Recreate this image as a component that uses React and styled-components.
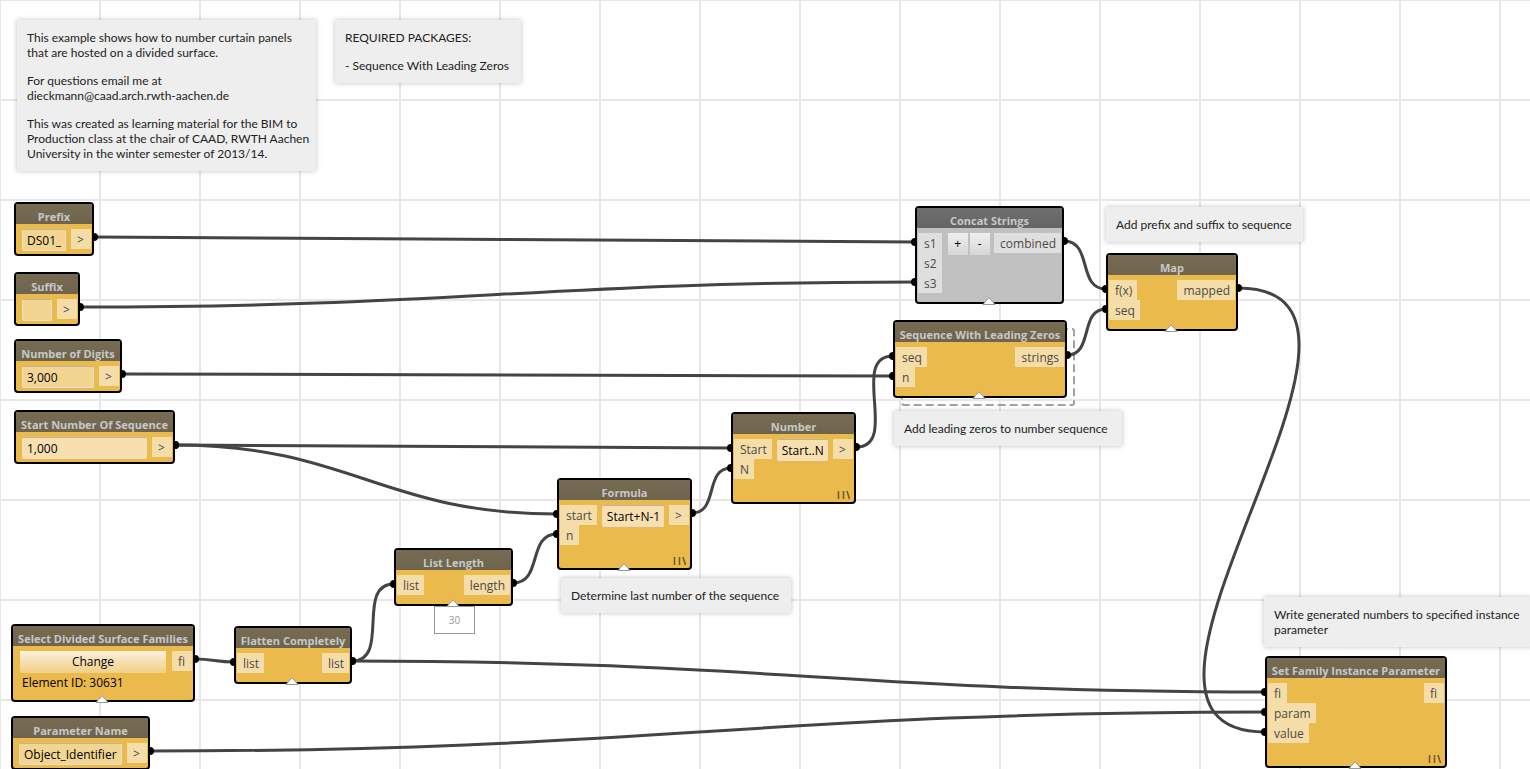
import React from "react";
import styled, { createGlobalStyle } from "styled-components";

const GlobalStyle = createGlobalStyle`
  *, *::before, *::after { box-sizing: border-box; }
  body { margin: 0; background: #fff; overflow: hidden; }
  button, input { font: inherit; color: inherit; }
`;

const ui = `"Open Sans", "Noto Sans", sans-serif`;

const Canvas = styled.main`
  position: relative;
  width: 100%;
  height: 100vh;
  overflow: hidden;
  font: 12px/20px ${ui};
  color: #000;
  background-color: #fff;
  background-image:
    linear-gradient(to right, #e7e7e7 2px, transparent 2px),
    linear-gradient(to bottom, #e7e7e7 2px, transparent 2px);
  background-size: 100px 100px;
  background-position: -1px -1px;
`;

const Wires = styled.svg`
  position: absolute;
  inset: 0;
  width: 100%;
  height: 100%;
  fill: none;
`;

const NoteBox = styled.aside`
  position: absolute;
  left: ${(p) => p.$x}px;
  top: ${(p) => p.$y}px;
  width: ${(p) => p.$w}px;
  display: flex;
  flex-direction: column;
  gap: 13px;
  padding: 10px;
  background: #eee;
  color: #222;
  font: 12px/15px Lato, "Open Sans", sans-serif;
  white-space: pre;
  box-shadow: 0 0 5px rgba(0, 0, 0, 0.25);
  p { margin: 0; }
`;

const NodeBox = styled.section`
  position: absolute;
  left: ${(p) => p.$x}px;
  top: ${(p) => p.$y}px;
  width: ${(p) => p.$w}px;
  height: ${(p) => p.$h}px;
  border: 2px solid #000;
  border-radius: 4px;
  background: ${(p) => (p.$muted ? "#c0c0c0" : "#ebba4c")};
`;

const Title = styled.h2`
  margin: 0;
  height: 20px;
  padding-top: 4px;
  font: bold 11px/18px ${ui};
  text-align: center;
  white-space: nowrap;
  color: #c8c8c8;
  background: ${(p) =>
    p.$muted
      ? "linear-gradient(#6f6f6f, #646464)"
      : "linear-gradient(#776b52, #6e644e)"};
`;

const Row = styled.div`
  display: flex;
  align-items: flex-start;
  padding: 5px 1px 0;
`;

const Ports = styled.div`
  display: flex;
  flex-direction: column;
  align-items: ${(p) => (p.$out ? "flex-end" : "flex-start")};
`;

const Port = styled.span`
  min-width: ${(p) => (p.$out ? 20 : 19)}px;
  height: 20px;
  padding: 0 5px 0 6px;
  line-height: 21px;
  color: #4d4a43;
  background: ${(p) => (p.$muted ? "#dfdfdf" : "#f4dda8")};
`;

const Middle = styled.div`
  flex: 1;
  min-width: 0;
  display: flex;
  flex-direction: ${(p) => (p.$stacked ? "column" : "row")};
  gap: 2px;
  padding: 0 ${(p) => (p.$wide ? 6 : 5)}px;
`;

const Field = styled.input`
  width: 100%;
  height: 22px;
  padding: 0 4px;
  border: 1px solid #e6dfcf;
  border-top-color: #b9b4a6;
  border-radius: 2px;
  background: ${(p) => (p.$light ? "#f7dfb0" : "#f3d592")};
  outline: none;
`;

const StepButton = styled.button`
  flex: none;
  width: 20px;
  height: 22px;
  padding: 0;
  border: 0;
  background: linear-gradient(#f0f0f0, #d6d6d6);
`;

const WideButton = styled.button`
  height: 22px;
  padding: 0;
  border: 0;
  background: linear-gradient(#fbf0d9, #f1cf88);
`;

const ElementId = styled.div`
  height: 18px;
  padding-left: 2px;
  line-height: 16px;
  white-space: nowrap;
`;

const PreviewArrow = styled.svg`
  position: absolute;
  left: 50%;
  bottom: -3px;
  width: 14px;
  height: 8px;
  margin-left: -8px;
`;

const Lacing = styled.svg`
  position: absolute;
  right: 3px;
  bottom: 2px;
  width: 14px;
  height: 10px;
  fill: none;
  stroke: #6b5a2e;
  stroke-width: 1.5;
`;

const Preview = styled.output`
  position: absolute;
  left: 434px;
  top: 606px;
  width: 41px;
  height: 28px;
  border: 1px solid #999;
  background: #fff;
  color: #999;
  font-size: 10px;
  line-height: 27px;
  text-align: center;
`;

const notes = [
  {
    x: 17, y: 20, w: 299,
    text: [
      "This example shows how to number curtain panels\nthat are hosted on a divided surface.",
      "For questions email me at\ndieckmann@caad.arch.rwth-aachen.de",
      "This was created as learning material for the BIM to\nProduction class at the chair of CAAD, RWTH Aachen\nUniversity in the winter semester of 2013/14.",
    ],
  },
  { x: 335, y: 20, w: 186, text: ["REQUIRED PACKAGES:", "- Sequence With Leading Zeros"] },
  { x: 1106, y: 207, w: 197, text: ["Add prefix and suffix to sequence"] },
  { x: 894, y: 411, w: 228, text: ["Add leading zeros to number sequence"] },
  { x: 561, y: 578, w: 230, text: ["Determine last number of the sequence"] },
  { x: 1264, y: 597, w: 268, text: ["Write generated numbers to specified instance\nparameter"] },
];

const nodes = [
  { title: "Prefix", x: 14, y: 202, w: 80, h: 54, field: "DS01_", outs: [">"] },
  { title: "Suffix", x: 14, y: 272, w: 66, h: 54, field: "", outs: [">"] },
  { title: "Number of Digits", x: 14, y: 339, w: 108, h: 54, field: "3,000", outs: [">"] },
  { title: "Start Number Of Sequence", x: 14, y: 410, w: 161, h: 54, field: "1,000", light: true, outs: [">"] },
  { title: "Concat Strings", x: 915, y: 206, w: 149, h: 98, muted: true, steps: true, ins: ["s1", "s2", "s3"], outs: ["combined"], arrow: true },
  { title: "Map", x: 1106, y: 253, w: 132, h: 78, ins: ["f(x)", "seq"], outs: ["mapped"], arrow: true },
  { title: "Sequence With Leading Zeros", x: 893, y: 320, w: 174, h: 78, ins: ["seq", "n"], outs: ["strings"], arrow: true },
  { title: "Number", x: 731, y: 412, w: 125, h: 92, ins: ["Start", "N"], field: "Start..N", light: true, outs: [">"], lacing: true },
  { title: "Formula", x: 557, y: 478, w: 135, h: 92, ins: ["start", "n"], field: "Start+N-1", light: true, outs: [">"], lacing: true, arrow: true },
  { title: "List Length", x: 394, y: 548, w: 119, h: 58, ins: ["list"], outs: ["length"], arrow: true },
  { title: "Select Divided Surface Families", x: 11, y: 624, w: 184, h: 78, change: true, outs: ["fi"], arrow: true },
  { title: "Flatten Completely", x: 234, y: 626, w: 118, h: 58, ins: ["list"], outs: ["list"], arrow: true },
  { title: "Parameter Name", x: 11, y: 716, w: 139, h: 54, field: "Object_Identifier", outs: [">"] },
  { title: "Set Family Instance Parameter", x: 1265, y: 656, w: 182, h: 112, ins: ["fi", "param", "value"], outs: ["fi"], lacing: true, arrow: true },
];

const wires = [
  [94, 237, 915, 242],
  [80, 307, 915, 282],
  [122, 374, 893, 376],
  [175, 445, 731, 448],
  [175, 445, 557, 514],
  [513, 583, 557, 534],
  [692, 513, 731, 468],
  [856, 447, 893, 356],
  [1064, 241, 1106, 289],
  [1067, 355, 1106, 309],
  [1238, 288, 1265, 732],
  [195, 659, 234, 662],
  [352, 661, 394, 584],
  [352, 661, 1265, 692],
  [150, 751, 1265, 712],
];

const curve = ([x1, y1, x2, y2]) => {
  const reach = Math.round(Math.hypot(x2 - x1, y2 - y1) * 0.45);
  return `M${x1} ${y1}C${x1 + reach} ${y1} ${x2 - reach} ${y2} ${x2} ${y2}`;
};

function Note({ x, y, w, text }) {
  return (
    <NoteBox $x={x} $y={y} $w={w}>
      {text.map((t) => <p key={t}>{t}</p>)}
    </NoteBox>
  );
}

function Node({ title, x, y, w, h, muted, ins = [], outs = [], field, light, steps, change, arrow, lacing }) {
  return (
    <NodeBox $x={x} $y={y} $w={w} $h={h} $muted={muted}>
      <Title $muted={muted}>{title}</Title>
      <Row>
        <Ports>{ins.map((p) => <Port key={p} $muted={muted}>{p}</Port>)}</Ports>
        <Middle $wide={steps || change} $stacked={change}>
          {field !== undefined && <Field $light={light} aria-label={title} defaultValue={field} />}
          {steps && <StepButton type="button">+</StepButton>}
          {steps && <StepButton type="button">-</StepButton>}
          {change && <WideButton type="button">Change</WideButton>}
          {change && <ElementId>Element ID: 30631</ElementId>}
        </Middle>
        <Ports $out>{outs.map((p) => <Port key={p} $out $muted={muted}>{p}</Port>)}</Ports>
      </Row>
      {lacing && (
        <Lacing viewBox="0 0 14 10" aria-hidden="true">
          <path d="M1.5 1v8M6.5 1v8M10 1l2.5 8" />
        </Lacing>
      )}
      {arrow && (
        <PreviewArrow viewBox="0 0 14 8" aria-hidden="true">
          <path d="M1 7.500L7 0.700L13 7.500Z" fill="#fff" stroke="#999" />
        </PreviewArrow>
      )}
    </NodeBox>
  );
}

export default function App() {
  return (
    <>
      <GlobalStyle />
      <Canvas>
        <Wires aria-hidden="true">
          <rect x="902" y="329" width="172" height="76" rx="2" stroke="#a3a0a0" strokeWidth="2" strokeDasharray="8 4" />
          {wires.map((w) => <path key={w.join()} d={curve(w)} stroke="#444" strokeWidth="3" />)}
          {wires.map(([x1, y1, x2, y2]) => (
            <g key={[x1, y1, x2, y2].join()} fill="#000">
              <circle cx={x1} cy={y1} r="4" />
              <circle cx={x2} cy={y2} r="4" />
            </g>
          ))}
        </Wires>
        {notes.map((n) => <Note key={n.text[0]} {...n} />)}
        {nodes.map((n) => <Node key={n.title} {...n} />)}
        <Preview>30</Preview>
      </Canvas>
    </>
  );
}
